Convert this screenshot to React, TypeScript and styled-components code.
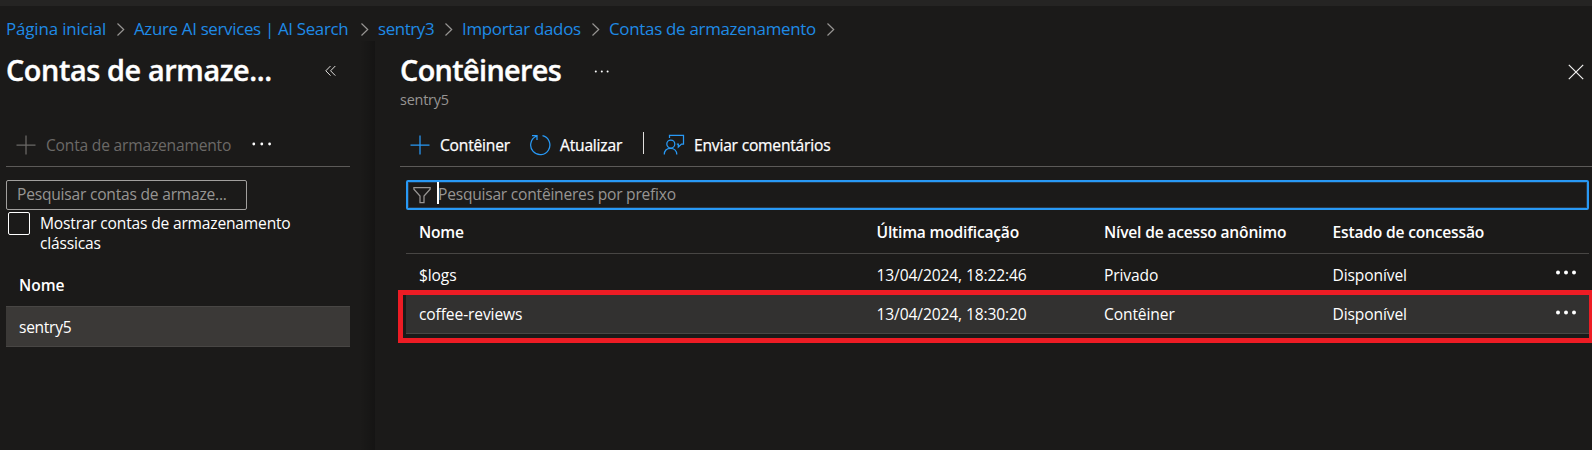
import React from "react";
import styled, { createGlobalStyle } from "styled-components";

const GlobalStyle = createGlobalStyle`
  * { box-sizing: border-box; }
  html, body { margin: 0; padding: 0; background: #1b1a19; overflow: hidden; }
  body { font-family: "Open Sans", "Noto Sans", sans-serif; color: #fff; }
`;

const Page = styled.div`
  width: 1592px;
  height: 450px;
  display: flex;
  flex-direction: column;
  background: #1b1a19;
  overflow: hidden;
`;

const TopStrip = styled.div`
  height: 6px;
  flex: none;
  background: #252423;
`;

const Breadcrumb = styled.nav`
  height: 35px;
  flex: none;
  display: flex;
  align-items: center;
  padding: 11px 0 0 6px;
`;

const Crumb = styled.a<{ $w: number; $ls?: number }>`
  width: ${(p) => p.$w}px;
  color: #1f8be6;
  font-size: 16.9px;
  line-height: 24px;
  letter-spacing: ${(p) => p.$ls ?? 0}px;
  white-space: nowrap;
`;

const ChevronIcon = styled.svg`
  width: 9px;
  height: 13px;
  flex: none;
  margin: 1px 9px 0 9px;
  fill: none;
  stroke: #979593;
  stroke-width: 1.2;
`;

const Blades = styled.div`
  flex: 1;
  display: flex;
  min-height: 0;
`;

const SideBlade = styled.aside`
  width: 375px;
  flex: none;
  padding: 0 25px 0 6px;
  background: linear-gradient(to right, rgba(0, 0, 0, 0) 360px, rgba(0, 0, 0, 0.22) 375px);
`;

const MainBlade = styled.main`
  flex: 1;
  min-width: 0;
  padding-left: 25px;
`;

const TitleRow = styled.header`
  height: 48px;
  display: flex;
  align-items: center;
  padding-top: 9px;
`;

const Title = styled.h1<{ $w: number; $ls: number }>`
  margin: 0;
  width: ${(p) => p.$w}px;
  font-size: 28.8px;
  font-weight: 600;
  line-height: 40px;
  letter-spacing: ${(p) => p.$ls}px;
  white-space: nowrap;
  -webkit-text-stroke: 0.4px #fff;
`;

const CollapseIcon = styled.svg`
  width: 12px;
  height: 12px;
  margin: 3px 0 0 52px;
  fill: none;
  stroke: #e1dfdd;
  stroke-width: 1;
`;

const CloseIcon = styled.svg`
  width: 16px;
  height: 16px;
  margin: 4px 8px 0 auto;
  fill: none;
  stroke: #f3f2f1;
  stroke-width: 1.2;
`;

const Dots = styled.svg<{ $gap?: string }>`
  flex: none;
  margin: ${(p) => p.$gap ?? "0"};
  fill: #fff;
`;

const Subtitle = styled.div`
  height: 33px;
  font-size: 14.4px;
  line-height: 22px;
  letter-spacing: -0.2px;
  color: #979593;
`;

const Toolbar = styled.div`
  height: 45px;
  display: flex;
  align-items: center;
  border-bottom: 1px solid #5c5a58;
`;

const ToolLabel = styled.span<{ $w: number; $muted?: boolean }>`
  width: ${(p) => p.$w}px;
  margin-top: 1px;
  font-size: 15.6px;
  line-height: 22px;
  white-space: nowrap;
  letter-spacing: -0.2px;
  color: ${(p) => (p.$muted ? "#6b6967" : "#fff")};
  -webkit-text-stroke: ${(p) => (p.$muted ? "0" : "0.25px #fff")};
`;

const ToolIcon = styled.svg<{ $left: number; $right: number; $color?: string }>`
  width: 22px;
  height: 22px;
  flex: none;
  margin: 1px ${(p) => p.$right}px 0 ${(p) => p.$left}px;
  fill: none;
  stroke: ${(p) => p.$color ?? "#2899f5"};
  stroke-width: 1.25;
`;

const ToolSeparator = styled.div`
  width: 1px;
  height: 22px;
  margin-top: -2px;
  background: #e1dfdd;
`;

const SideSearch = styled.div`
  width: 241px;
  height: 30px;
  margin-top: 13px;
  padding: 0 10px;
  border: 1px solid #a19f9d;
  border-radius: 2px;
  font-size: 15.6px;
  line-height: 26px;
  letter-spacing: -0.22px;
  white-space: nowrap;
  color: #979593;
`;

const CheckRow = styled.label`
  display: flex;
  padding: 2px 0 0 2px;
  height: 63px;
  font-size: 15.6px;
  line-height: 20px;
  letter-spacing: -0.19px;
`;

const CheckBox = styled.span`
  width: 22px;
  height: 23px;
  flex: none;
  margin-right: 10px;
  border: 1px solid #fff;
  border-radius: 2px;
`;

const CheckText = styled.span`
  padding-top: 1px;
  white-space: nowrap;
`;

const SideHead = styled.div`
  height: 33px;
  padding-left: 13px;
  font-size: 15.6px;
  font-weight: 600;
  line-height: 25px;
`;

const SideRow = styled.div`
  height: 41px;
  padding-left: 13px;
  background: #3b3937;
  border: solid #484644;
  border-width: 1px 0;
  font-size: 15.6px;
  letter-spacing: -0.3px;
  line-height: 40px;
`;

const FilterBox = styled.div`
  height: 30px;
  margin: 13px 3px 0 6px;
  display: flex;
  align-items: center;
  padding-left: 6px;
  border: 2px solid #2899f5;
  border-radius: 2px;
  box-shadow: inset 0 0 0 1px #26394b;
  color: #979593;
  font-size: 15.6px;
  letter-spacing: -0.23px;
  line-height: 24px;
`;

const FilterLabel = styled.span`
  padding-bottom: 2px;
`;

const FilterIcon = styled.svg`
  width: 18px;
  height: 18px;
  margin: -1px 5px 0 -1px;
  fill: none;
  stroke: #979593;
  stroke-width: 1.25;
`;

const Caret = styled.span`
  width: 2px;
  height: 22px;
  margin: -4px -1px 0 1px;
  background: #fff;
`;

const Grid = styled.div`
  position: relative;
  margin: 0 3px 0 6px;
`;

const Row = styled.div<{ $h: number; $head?: boolean; $active?: boolean; $lh: number }>`
  display: grid;
  grid-template-columns: 457.5px 227.5px 228.5px 1fr 33px;
  height: ${(p) => p.$h}px;
  padding-left: 13px;
  font-size: 15.6px;
  font-weight: ${(p) => (p.$head ? 600 : 400)};
  letter-spacing: ${(p) => (p.$head ? -0.19 : -0.12)}px;
  line-height: ${(p) => p.$lh}px;
  white-space: nowrap;
  background: ${(p) => (p.$active ? "#323130" : "transparent")};
  border-bottom: 1px solid #484644;
`;

const Highlight = styled.div`
  position: absolute;
  left: -8px;
  right: -5px;
  top: 80px;
  height: 53px;
  border: 5px solid #ed1c24;
`;

const Chevron = () => (
  <ChevronIcon viewBox="0 0 9 13">
    <path d="M1.5 .5 7.7 6.5 1.5 12.5" />
  </ChevronIcon>
);

const crumbs = [
  { text: "Página inicial", w: 101, ls: -0.13 },
  { text: "Azure AI services | AI Search", w: 217, ls: -0.32 },
  { text: "sentry3", w: 57, ls: -0.4 },
  { text: "Importar dados", w: 120, ls: -0.28 },
  { text: "Contas de armazenamento", w: 208, ls: -0.28 },
];

const rows = [
  { name: "$logs", date: "13/04/2024, 18:22:46", level: "Privado", state: "Disponível", h: 41, lh: 43, dot: 16, active: false },
  { name: "coffee-reviews", date: "13/04/2024, 18:30:20", level: "Contêiner", state: "Disponível", h: 39, lh: 39, dot: 15, active: true },
];

const RowDots = ({ top }: { top: number }) => (
  <Dots $gap={`${top}px 0 0 0`} width="22" height="5" viewBox="0 0 22 5">
    <circle cx="2" cy="2.5" r="2" />
    <circle cx="10" cy="2.5" r="2" />
    <circle cx="18" cy="2.5" r="2" />
  </Dots>
);

export default function App() {
  return (
    <Page>
      <GlobalStyle />
      <TopStrip />
      <Breadcrumb>
        {crumbs.map((c) => (
          <React.Fragment key={c.text}>
            <Crumb $w={c.w} $ls={c.ls}>{c.text}</Crumb>
            <Chevron />
          </React.Fragment>
        ))}
      </Breadcrumb>
      <Blades>
        <SideBlade>
          <TitleRow>
            <Title $w={267} $ls={-0.38}>Contas de armaze...</Title>
            <CollapseIcon viewBox="0 0 12 12">
              <path d="M5.5 1 .8 5.8 5.5 10.6M10.3 1 5.6 5.8 10.3 10.6" />
            </CollapseIcon>
          </TitleRow>
          <Subtitle />
          <Toolbar>
            <ToolIcon viewBox="0 0 22 22" $left={9} $right={9} $color="#6b6967">
              <path d="M11 1.5V20.5M1.5 11H20.5" />
            </ToolIcon>
            <ToolLabel $w={205} $muted>Conta de armazenamento</ToolLabel>
            <Dots width="22" height="4" viewBox="0 0 22 4" $gap="0 0 0 1px">
              <circle cx="1.8" cy="2" r="1.4" />
              <circle cx="9.8" cy="2" r="1.4" />
              <circle cx="17.6" cy="2" r="1.4" />
            </Dots>
          </Toolbar>
          <SideSearch>Pesquisar contas de armaze...</SideSearch>
          <CheckRow>
            <CheckBox />
            <CheckText>Mostrar contas de armazenamento<br />clássicas</CheckText>
          </CheckRow>
          <SideHead>Nome</SideHead>
          <SideRow>sentry5</SideRow>
        </SideBlade>
        <MainBlade>
          <TitleRow>
            <Title $w={194} $ls={-0.62}>Contêineres</Title>
            <Dots width="16" height="3" viewBox="0 0 16 3" $gap="4px 0 0 0">
              <circle cx="1.8" cy="1.5" r="1" />
              <circle cx="7.8" cy="1.5" r="1" />
              <circle cx="13.6" cy="1.5" r="1" />
            </Dots>
            <CloseIcon viewBox="0 0 16 16">
              <path d="M.8 .8 15.2 15.2M15.2 .8 .8 15.2" />
            </CloseIcon>
          </TitleRow>
          <Subtitle>sentry5</Subtitle>
          <Toolbar>
            <ToolIcon viewBox="0 0 22 22" $left={9} $right={9}>
              <path d="M11 1.5V20.5M1.5 11H20.5" />
            </ToolIcon>
            <ToolLabel $w={89}>Contêiner</ToolLabel>
            <ToolIcon viewBox="0 0 22 22" $left={0} $right={9}>
              <path d="M3 1.5H8V6M8 1.5 7.3 2.3A9.6 9.6 0 1 0 13.5 1.7" />
            </ToolIcon>
            <ToolLabel $w={83}>Atualizar</ToolLabel>
            <ToolSeparator />
            <ToolIcon viewBox="0 0 22 22" $left={19} $right={9}>
              <path d="M6.5 4V1.3H20.5V10H18.5L15.3 13V10H13.8" />
              <circle cx="7.8" cy="10" r="4" />
              <path d="M1.3 20.5C1.3 16.5 4 14.3 7.5 14.3S13.8 16.5 13.8 20.5" />
            </ToolIcon>
            <ToolLabel $w={140}>Enviar comentários</ToolLabel>
          </Toolbar>
          <FilterBox>
            <FilterIcon viewBox="0 0 18 18">
              <path d="M.9 1.6H17.1V3.2L11 10V16.6H7V10L.9 3.2Z" />
            </FilterIcon>
            <Caret />
            <FilterLabel>Pesquisar contêineres por prefixo</FilterLabel>
          </FilterBox>
          <Grid>
            <Row $h={44} $lh={45} $head>
              <span>Nome</span>
              <span>Última modificação</span>
              <span>Nível de acesso anônimo</span>
              <span>Estado de concessão</span>
            </Row>
            {rows.map((r) => (
              <Row key={r.name} $h={r.h} $lh={r.lh} $active={r.active}>
                <span>{r.name}</span>
                <span>{r.date}</span>
                <span>{r.level}</span>
                <span>{r.state}</span>
                <RowDots top={r.dot} />
              </Row>
            ))}
            <Highlight />
          </Grid>
        </MainBlade>
      </Blades>
    </Page>
  );
}
